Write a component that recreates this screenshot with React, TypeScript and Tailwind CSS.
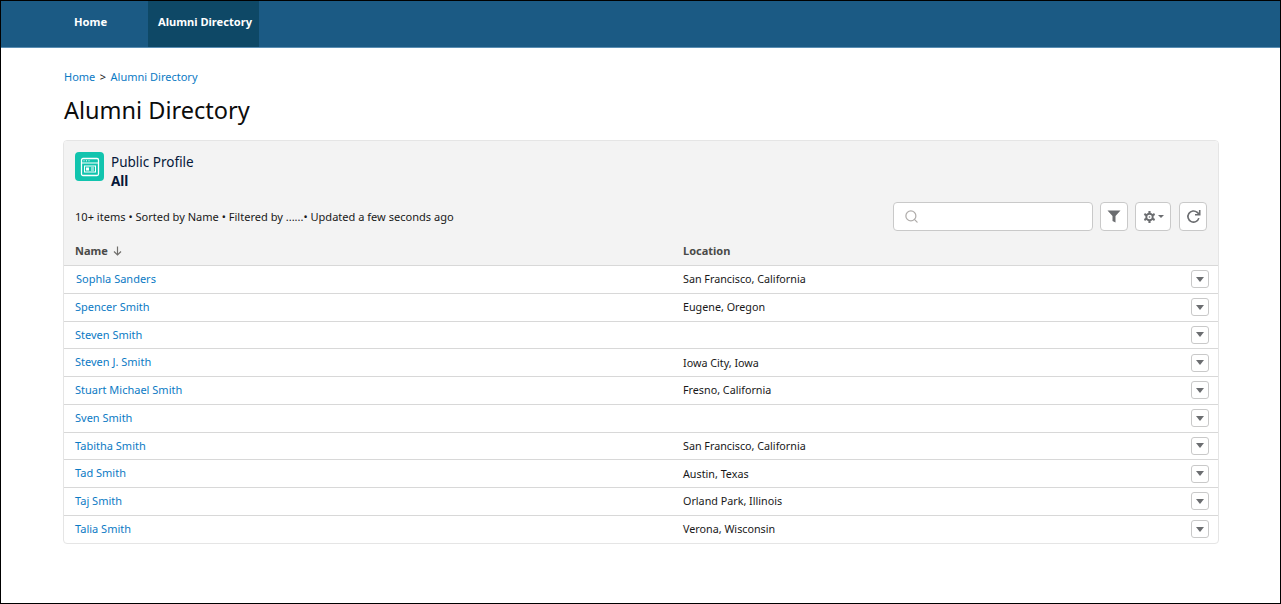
import { Search } from "lucide-react";

const ROWS: { name: string; location: string }[] = [
  { name: "Sophla Sanders", location: "San Francisco, California" },
  { name: "Spencer Smith", location: "Eugene, Oregon" },
  { name: "Steven Smith", location: "" },
  { name: "Steven J. Smith", location: "Iowa City, Iowa" },
  { name: "Stuart Michael Smith", location: "Fresno, California" },
  { name: "Sven Smith", location: "" },
  { name: "Tabitha Smith", location: "San Francisco, California" },
  { name: "Tad Smith", location: "Austin, Texas" },
  { name: "Taj Smith", location: "Orland Park, Illinois" },
  { name: "Talia Smith", location: "Verona, Wisconsin" },
];

function ProfileIcon() {
  return (
    <svg width="20" height="20" viewBox="0 0 20 20" fill="none" stroke="white">
      <rect x="1.5" y="1.5" width="17" height="17" rx="1.5" strokeWidth="1.3" />
      <path d="M2 6h16" strokeWidth="1.2" />
      <path d="M3.5 3.800h1M6 3.800h1M8.500 3.800h1" strokeWidth="1" />
      <rect x="4.500" y="9" width="11" height="6" strokeWidth="1" />
      <rect x="6" y="10.500" width="3" height="3" fill="white" stroke="none" />
      <path d="M11 11h3M11 13h3" strokeWidth="1" />
    </svg>
  );
}

function FilterIcon() {
  return (
    <svg width="14" height="13" viewBox="0 0 14 13" fill="#6b6d70">
      <path d="M0.500 0.500h13L8.500 6v6.500L5.500 11V6z" />
    </svg>
  );
}

function GearIcon() {
  return (
    <svg width="13" height="14" viewBox="0 0 24 24" fill="none" stroke="#6b6d70">
      <circle cx="12" cy="12" r="6" strokeWidth="3.500" />
      <circle cx="12" cy="12" r="1.500" fill="#6b6d70" stroke="none" />
      <path d="M12 1v5M12 18v5M2.500 6.500l4.300 2.500M17.200 15l4.300 2.500M2.500 17.500L6.800 15M17.200 9l4.300-2.500" strokeWidth="4" />
    </svg>
  );
}

function RefreshIcon() {
  return (
    <svg width="15" height="15" viewBox="0 0 14 14" fill="none" stroke="#6b6d70" strokeWidth="1.500">
      <path d="M12 8.500A5.200 5.200 0 1 1 10.500 3.200L12.200 4.800" />
      <path d="M12.800 1V5.400H8.400" fill="none" />
    </svg>
  );
}

function ToolButton({ className, children }: { className: string; children: React.ReactNode }) {
  return (
    <button
      type="button"
      className={`h-[29px] flex items-center justify-center bg-white border border-[#c9c9c9] rounded ${className}`}
    >
      {children}
    </button>
  );
}

export default function App() {
  return (
    <div className="h-[604px] border border-black bg-white font-['Noto_Sans','Open_Sans',sans-serif] text-[#181818] overflow-hidden">
      <nav className="h-[47px] flex pl-[73px] bg-[#1b5a84] border-b border-[#5a8eb3]">
        <a className="w-[74px] flex items-center pb-[3px] text-[11.200px] font-bold text-white">Home</a>
        <a className="w-[111px] flex items-center justify-center pl-[3px] pb-[3px] text-[11.100px] font-bold text-white bg-[#0e4866]">
          Alumni Directory
        </a>
      </nav>

      <main className="pl-[62px] pr-[61px]">
        <div className="mt-[20px] pl-px h-[18px] flex items-center gap-[4.500px] text-[11px]">
          <a className="text-[#0b7ac4]">Home</a>
          <span>&gt;</span>
          <a className="text-[#0b7ac4]">Alumni Directory</a>
        </div>
        <h1 className="mt-[7px] pl-px h-[36px] flex items-center text-[23.500px] text-[#0c0c0c]">Alumni Directory</h1>

        <section className="mt-[11px] border border-[#e5e5e5] rounded overflow-hidden">
          <div className="h-[124px] px-[11px] bg-[#f3f3f3] flex flex-col">
            <div className="mt-[11px] flex gap-[7px]">
              <div className="w-[29px] h-[29px] rounded bg-[#11c4ae] flex items-center justify-center">
                <ProfileIcon />
              </div>
              <div className="text-[#06183a]">
                <p className="text-[13.500px] leading-[19px] mt-[1px]">Public Profile</p>
                <p className="text-[13.500px] leading-[19px] font-bold">All</p>
              </div>
            </div>
            <div className="mt-[11px] flex items-center">
              <p className="text-[11.060px] flex-1 pt-[2px]">10+ items • Sorted by Name • Filtered by ......• Updated a few seconds ago</p>
              <div className="w-[200px] h-[29px] flex items-center pl-[10px] bg-white border border-[#c9c9c9] rounded">
                <Search size={15} strokeWidth={2} className="text-[#b0adab]" />
              </div>
              <ToolButton className="w-[28px] ml-[7px]">
                <FilterIcon />
              </ToolButton>
              <ToolButton className="w-[36px] ml-[7px] gap-[2px]">
                <GearIcon />
                <span className="border-x-[3px] border-x-transparent border-t-[3px] border-t-[#6b6d70]" />
              </ToolButton>
              <ToolButton className="w-[28px] ml-[8px]">
                <RefreshIcon />
              </ToolButton>
            </div>
            <div className="mt-[12px] flex items-center text-[11px] font-bold text-[#4a4a48]">
              <span className="w-[608px] flex items-center gap-[5px]">
                Name
                <svg width="9" height="10" viewBox="0 0 9 10" fill="none" stroke="#706e6b" strokeWidth="1.200">
                  <path d="M4.500 0.500V9M1 5.500L4.500 9L8 5.500" />
                </svg>
              </span>
              <span>Location</span>
            </div>
          </div>
          {ROWS.map((row, i) => (
            <div key={row.name} className="h-[27.750px] pl-[11px] pr-[9px] flex items-center border-t border-[#d8d8d8] text-[11px]">
              <a className={`w-[608px] text-[#0b7ac4] ${i === 0 ? "pl-px" : ""}`}>{row.name}</a>
              <span className="flex-1 text-[10.750px]">{row.location}</span>
              <button
                type="button"
                className="w-[18px] h-[18px] flex items-center justify-center bg-white border border-[#c9c9c9] rounded-[3px]"
              >
                <span className="border-x-[4px] border-x-transparent border-t-[5px] border-t-[#6b6d70]" />
              </button>
            </div>
          ))}
        </section>
      </main>
    </div>
  );
}
